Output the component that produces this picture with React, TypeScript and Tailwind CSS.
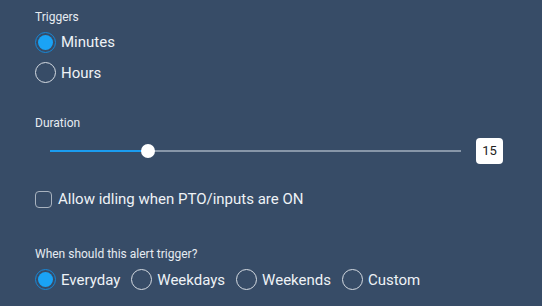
import { useState } from "react";

function Radio({ checked, label, onClick }: { checked: boolean; label: string; onClick: () => void }) {
  return (
    <button onClick={onClick} className="flex items-center gap-[5px] text-[15px] text-[#eef2f6]">
      <span
        className={`flex h-[21px] w-[21px] items-center justify-center rounded-full border-[1.5px] ${
          checked ? "border-[#1787d6]" : "border-[#d5dbe2]"
        }`}
      >
        {checked && <span className="h-[15px] w-[15px] rounded-full bg-[#1aa3f5]" />}
      </span>
      {label}
    </button>
  );
}

export default function App() {
  const [trigger, setTrigger] = useState("Minutes");
  const [when, setWhen] = useState("Everyday");
  const [idle, setIdle] = useState(false);
  const duration = 15;

  return (
    <div className="h-[306px] w-[542px] overflow-hidden bg-[#374c67] pl-[35px] pt-[10px] font-['Roboto',sans-serif]">
      {/* Triggers */}
      <div className="text-[12px] leading-[15px] text-[#e6ebf1]">Triggers</div>
      <div className="mt-[6px] flex flex-col gap-[8px]">
        {["Minutes", "Hours"].map((t) => (
          <Radio key={t} label={t} checked={trigger === t} onClick={() => setTrigger(t)} />
        ))}
      </div>

      {/* Duration */}
      <div className="mt-[32px] text-[12px] leading-[15px] text-[#e6ebf1]">Duration</div>
      <div className="mt-[7px] flex items-center pl-[15px] pr-[39px]">
        <div className="relative h-[26px] flex-1">
          <div className="absolute left-0 right-0 top-[12px] h-[2px] bg-[#8796a8]" />
          <div className="absolute left-0 top-[12px] h-[2px] w-[98px] bg-[#1a9cf0]" />
          <div className="absolute left-[91px] top-[6px] h-[14px] w-[14px] rounded-full bg-white" />
        </div>
        <div className="ml-[15px] flex h-[26px] w-[27px] items-center justify-center rounded-[4px] bg-white text-[13px] text-[#222]">
          {duration}
        </div>
      </div>

      {/* Idling */}
      <button
        onClick={() => setIdle(!idle)}
        className="mt-[24px] flex items-center gap-[6px] text-[15px] text-[#eef2f6]"
      >
        <span className="h-[17px] w-[17px] rounded-[4px] border-[1.5px] border-[#a9b3bf]" />
        Allow idling when PTO/inputs are ON
      </button>

      {/* When */}
      <div className="mt-[36px] text-[12px] leading-[15px] text-[#e6ebf1]">When should this alert trigger?</div>
      <div className="mt-[7px] flex gap-[11px]">
        {["Everyday", "Weekdays", "Weekends", "Custom"].map((w) => (
          <Radio key={w} label={w} checked={when === w} onClick={() => setWhen(w)} />
        ))}
      </div>
    </div>
  );
}
